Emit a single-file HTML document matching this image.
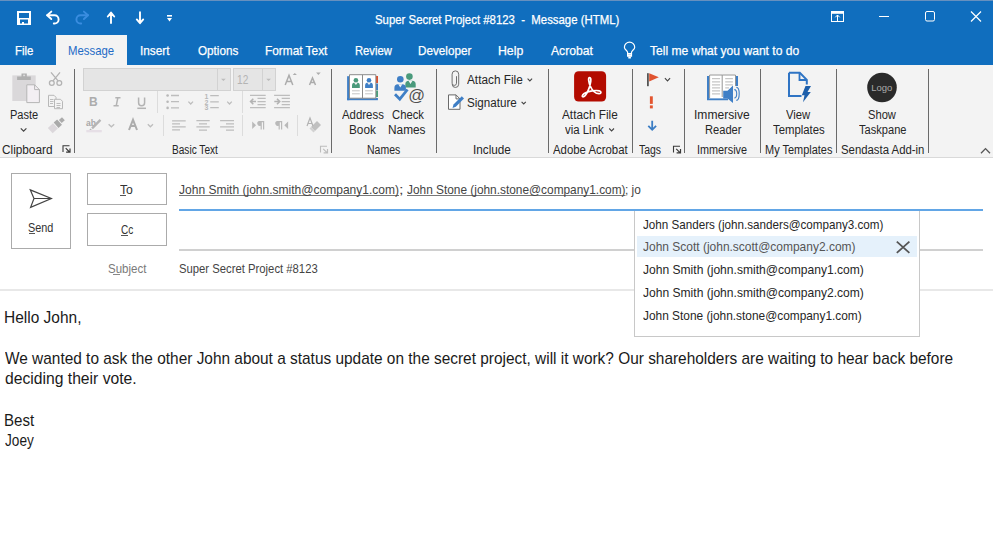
<!DOCTYPE html>
<html><head><meta charset="utf-8"><title>Outlook Message</title>
<style>
html,body{margin:0;padding:0}
body{width:993px;height:536px;overflow:hidden;position:relative;background:#fff;font-family:"Liberation Sans",sans-serif}
.a{position:absolute}
.t{position:absolute;white-space:pre;line-height:normal;transform-origin:0 0;font-family:"Liberation Sans",sans-serif}
svg{position:absolute;overflow:visible}
.sep{position:absolute;width:1px;background:#6a6a6a}
</style></head><body>
<!-- title bar + tabs -->
<div class="a" style="left:0;top:0;width:993px;height:65px;background:#106ebe"></div>
<div class="a" style="left:0;top:0;width:993px;height:1px;background:#6690bf"></div>
<div class="a" style="left:56px;top:35px;width:71px;height:30px;background:#f3f3f3"></div>
<!-- ribbon -->
<div class="a" style="left:0;top:65px;width:993px;height:92px;background:#f3f3f3"></div>
<div class="a" style="left:0;top:157px;width:993px;height:1px;background:#d9d9d9"></div>
<!-- separators -->
<div class="sep" style="left:74px;top:69px;height:84px;background:#6a6a6a"></div>
<div class="sep" style="left:331px;top:69px;height:84px"></div>
<div class="sep" style="left:436px;top:69px;height:84px"></div>
<div class="sep" style="left:548px;top:69px;height:84px"></div>
<div class="sep" style="left:632px;top:69px;height:84px"></div>
<div class="sep" style="left:684px;top:69px;height:84px"></div>
<div class="sep" style="left:760px;top:69px;height:84px"></div>
<div class="sep" style="left:836px;top:69px;height:84px"></div>
<div class="sep" style="left:928px;top:69px;height:84px"></div>
<!-- font combos -->
<div class="a" style="left:83px;top:68px;width:146px;height:21px;background:#e5e5e5;border:1px solid #d2d2d2"></div>
<div class="a" style="left:217px;top:69px;width:1px;height:21px;background:#d2d2d2"></div>
<div class="a" style="left:233px;top:68px;width:41px;height:21px;background:#e5e5e5;border:1px solid #d2d2d2"></div>
<div class="a" style="left:262px;top:69px;width:1px;height:21px;background:#d2d2d2"></div>

<!-- compose header -->
<div class="a" style="left:11px;top:173px;width:58px;height:74px;border:1px solid #ababab"></div>
<div class="a" style="left:87px;top:173px;width:78px;height:30px;border:1px solid #ababab"></div>
<div class="a" style="left:87px;top:213px;width:78px;height:31px;border:1px solid #ababab"></div>
<div class="a" style="left:179px;top:209px;width:804px;height:2px;background:#62a6e6"></div>
<div class="a" style="left:179px;top:249px;width:804px;height:2px;background:#d0d0d0"></div>
<div class="a" style="left:0;top:289px;width:993px;height:2px;background:#e8e8e8"></div>
<!-- dropdown -->
<div class="a" style="left:634px;top:211px;width:284px;height:125px;background:#fff;border:1px solid #c8c8c8;border-top:none"></div>
<div class="a" style="left:637px;top:236px;width:280px;height:21px;background:#e5f1fb"></div>

<!-- access key underlines -->
<div class="a" style="left:120px;top:195px;width:6px;height:1px;background:#555"></div>
<div class="a" style="left:120.5px;top:235px;width:7.5px;height:1px;background:#555"></div>
<div class="a" style="left:29px;top:233px;width:6px;height:1px;background:#555"></div>
<div class="a" style="left:113px;top:274px;width:7px;height:1px;background:#888"></div>
<svg width="993" height="536" viewBox="0 0 993 536" style="left:0;top:0">
<!-- QAT -->
<g fill="#fff">
  <path d="M17 11h14v14h-14z M19 13v5h10v-5z M20 19.5v4h2v-1.5h2v1.5h4v-4z" fill-rule="evenodd"/>
</g>
<g fill="none" stroke="#fff" stroke-width="1.9" stroke-linecap="round" stroke-linejoin="round">
  <path d="M47.2 15.3H54.5A4.1 4.1 0 0 1 54.5 23.5H53.8"/>
  <path d="M51.3 11.6L47.2 15.3L51.3 19"/>
  <path d="M107.8 16.5L111 12.6L114.2 16.5M111 13V23"/>
  <path d="M136.8 19.4L140 23.2L143.2 19.4M140 12.3V22.6"/>
</g>
<g fill="none" stroke="#3a8de0" stroke-width="1.9" stroke-linecap="round" stroke-linejoin="round">
  <path d="M88 15.3H80.5A4.1 4.1 0 0 0 80.5 23.5H81.2"/>
  <path d="M83.9 11.6L88 15.3L83.9 19"/>
</g>
<g fill="#fff">
  <rect x="167" y="15" width="5" height="1.6"/>
  <path d="M167 18H172L169.5 21.6Z"/>
</g>
<!-- window controls -->
<g fill="none" stroke="#fff" stroke-width="1">
  <rect x="831.5" y="11.5" width="12" height="10"/>
  <path d="M831.5 13.3H843.5"/>
  <path d="M837.5 21V15M835.3 17.3L837.5 15L839.7 17.3"/>
  <path d="M879 16.5H889"/>
  <rect x="925.5" y="11.5" width="9" height="9.5" rx="1.5"/>
  <path d="M971 11.5L981 21.5M981 11.5L971 21.5" stroke-width="1.2"/>
</g>
<rect x="831" y="11" width="13" height="2" fill="#fff"/>
<!-- lightbulb -->
<g fill="none" stroke="#fff" stroke-width="1.2">
  <path d="M627.6 53.6V52.3C627.6 50.6 624.4 49.6 624.4 47.2A5.15 5.15 0 0 1 634.7 47.2C634.7 49.6 631.5 50.6 631.5 52.3V53.6"/>
  <path d="M627.6 53.6H631.5V56.2H627.6Z M627.6 55H631.5"/>
</g>
<rect x="628.3" y="56.6" width="2.6" height="1.9" fill="#fff"/>
<!-- clipboard group -->
<rect x="12.3" y="75.4" width="23.4" height="25.6" fill="#dad8da"/>
<path d="M17.1 80V76.5H21.5V73.5H26.8V76.5H30.8V80Z" fill="#b0b0b0"/>
<rect x="23.2" y="74.6" width="1.9" height="1.6" fill="#dcdcdc"/>
<path d="M26.8 84.8H34.6L39.4 89.6V102.6H26.8Z" fill="#f3eff3" stroke="#b5b5b5" stroke-width="1"/>
<path d="M34.6 84.8V89.6H39.4" fill="none" stroke="#b5b5b5" stroke-width="1"/>
<g fill="none" stroke="#b3b3b3" stroke-width="1.3">
  <circle cx="51.8" cy="83" r="2.4"/><circle cx="59.3" cy="83" r="2.4"/>
  <path d="M53 80.8L60 72.3M58.1 80.8L51 72.3"/>
</g>
<g fill="#f3f3f3" stroke="#b8b8b8" stroke-width="1">
  <path d="M48.5 95.3H54L56 97.3V106.5H48.5Z"/>
  <path d="M54.5 99.3H60.5L62.5 101.3V108.7H54.5Z"/>
</g>
<g stroke="#bdbdbd" stroke-width="1">
  <path d="M50 99.5H53.5M50 101.5H53.5M50 103.5H53M56.5 103.5H60.5M56.5 105.5H60.5M56.5 107.5H60"/>
</g>
<g transform="translate(57.3 124.2) rotate(-42)">
  <rect x="-9.5" y="-3.6" width="7" height="7.2" fill="#dbd7db"/>
  <rect x="-1.6" y="-3.6" width="4.6" height="7.2" fill="#a9a9a9"/>
  <rect x="4" y="-2.1" width="4.2" height="4.2" fill="#ababab"/>
</g>
<path d="M20.8 128.4L23.6 131.2L26.4 128.4" fill="none" stroke="#444" stroke-width="1.2"/>
<path d="M63.0 152.0V145.7H69.5" fill="none" stroke="#3a3a3a" stroke-width="1.1"/><path d="M65.7 148.2L69.5 152.0M66.1 152.2H70.0V148.39999999999998" fill="none" stroke="#3a3a3a" stroke-width="1.2"/>
<path d="M320.5 152.60000000000002V146.3H327" fill="none" stroke="#bdbdbd" stroke-width="1.1"/><path d="M323.2 148.8L327 152.60000000000002M323.6 152.8H327.5V149.0" fill="none" stroke="#bdbdbd" stroke-width="1.2"/>
<path d="M673.5 152.60000000000002V146.3H680" fill="none" stroke="#3a3a3a" stroke-width="1.1"/><path d="M676.2 148.8L680 152.60000000000002M676.6 152.8H680.5V149.0" fill="none" stroke="#3a3a3a" stroke-width="1.2"/>
<!-- basic text -->
<path d="M221 78.8L223.4 81L225.8 78.8Z M266.2 78.8L268.6 81L271 78.8Z" fill="#bdbdbd"/>
<g fill="#b0b0b0" font-family="Liberation Sans" >
</g>
<g fill="none" stroke="#acacac" stroke-width="1.5">
  <path d="M285.2 85L289 75.3L292.8 85M286.6 81.6H291.4"/>
  <path d="M309.5 85L312.5 77.9L315.5 85M310.6 82.5H314.4"/>
</g>
<path d="M292.7 75.1L294.8 73L296.9 75.1Z M316.1 72.5H320.7L318.4 75.1Z" fill="#acacac"/>
<g fill="#dcdcdc">
  <rect x="157" y="91" width="1" height="22"/><rect x="242" y="91" width="1" height="22"/>
  <rect x="163" y="115" width="1" height="21"/><rect x="242" y="115" width="1" height="21"/><rect x="297" y="115" width="1" height="21"/>
</g>
<text x="89" y="106.1" font-family="Liberation Sans" font-size="12" font-weight="bold" fill="#acacac">B</text>
<g fill="none" stroke="#b3b3b3" stroke-width="1.5">
  <path d="M117.8 97.8L116.2 105.8M115.3 97.8H120.5M113.5 105.8H118.7"/>
  <path d="M138.6 97.5V102.8A3 3 0 0 0 144.6 102.8V97.5"/>
  <path d="M137.3 108.3H146"/>
</g>
<g fill="#b8b8b8">
  <circle cx="167.6" cy="95.5" r="1.3"/><circle cx="167.6" cy="101.7" r="1.3"/><circle cx="167.6" cy="107.9" r="1.3"/>
</g>
<g fill="none" stroke="#bdbdbd" stroke-width="1.3">
  <path d="M171 95.5H179M171 101.7H179M171 107.9H179"/>
  <path d="M210.2 95.7H218.8M210.2 101.8H218.8M210.2 107.7H218.8"/>
  <path d="M188.4 101.6L190.7 104L193 101.6M227.2 101.6L229.5 104L231.8 101.6M108.6 124.2L111.4 126.8L114.2 124.2M147.8 124.2L150.4 126.8L153 124.2"/>
  <path d="M250 95.4H265.7M257.5 98.4H265.7M257.5 101.6H265.7M257.5 104.7H265.7M250 107.7H265.7"/>
  <path d="M274.1 95.4H289.9M281.7 98.4H289.9M281.7 101.6H289.9M281.7 104.7H289.9M274.1 107.7H289.9"/>
  <path d="M172.1 120.8H185.7M172.1 123.8H180M172.1 126.9H185.7M172.1 129.9H180"/>
  <path d="M196.4 120.6H209.7M199 123.8H207M196.4 126.9H209.7M199 130.1H207"/>
  <path d="M220.1 120.6H234M226 123.8H234M220.1 126.9H234M226 130.1H234"/>
</g>
<g fill="none" stroke="#b3b3b3" stroke-width="1.6">
  <path d="M256 101.5H250.8M253.3 98.8L250.6 101.5L253.3 104.2"/>
  <path d="M274.3 101.5H279.5M277 98.8L279.7 101.5L277 104.2"/>
</g>
<g fill="#b8b8b8" font-family="Liberation Sans" font-size="7" font-weight="bold">
  <text x="204.6" y="98.6">1</text><text x="204.6" y="104.5">2</text><text x="204.6" y="110.4">3</text>
</g>
<!-- highlight & font color -->
<g fill="#b3b3b3">
  <text x="86" y="125.5" font-family="Liberation Sans" font-size="8.5" font-weight="bold" fill="#a8a8a8">ab</text>
</g>
<path d="M91.2 127.5L99.6 119L101.3 120.7L92.9 129.2Z M90.2 128.5L92 130H89.5Z" fill="#b5b5b5"/>
<rect x="86.3" y="130" width="15.5" height="2.3" fill="#e6dfe6"/>
<path d="M129 130L133 119.8L137 130M130.6 126H135.4" fill="none" stroke="#acacac" stroke-width="2"/>
<!-- LTR/RTL -->
<g fill="#b9b9b9">
  <path d="M252.2 121.5L256 125.2L252.2 128.9Z"/>
  <path d="M259 121H264.2V129.4H263V122.3H261.8V129.4H260.6V125.8A2.4 2.4 0 0 1 259 121Z"/>
  <path d="M288.1 121.5L284.3 125.2L288.1 128.9Z"/>
  <path d="M277 121H282.2V129.4H281V122.3H279.8V129.4H278.6V125.8A2.4 2.4 0 0 1 277 121Z"/>
</g>
<g fill="#c0c0c0">
  <path d="M311 127L317 121L321 125L315 131Z"/>
  <path d="M309.5 128.5L311 127L315 131L313.5 132.5Z" fill="#d2d2d2"/>
</g>
<path d="M307 126L310 118L313 126M308 123.5H312" fill="none" stroke="#b3b3b3" stroke-width="1.2"/>
<!-- Names: address book -->
<rect x="347.1" y="76.2" width="2.2" height="24" fill="#3f7fc6"/>
<rect x="347.1" y="98" width="30.8" height="2.2" fill="#3f7fc6"/>
<rect x="376" y="76" width="2" height="7" fill="#d9502f"/>
<rect x="376" y="83.5" width="2" height="6.5" fill="#3f7fc6"/>
<rect x="376" y="90.5" width="2" height="6.5" fill="#4aa07c"/>
<path d="M349.5 74.7H362.5V98.2H349.5Z M362.5 74.7H375.8V98.2H362.5Z" fill="#fff" stroke="#8c8c8c" stroke-width="1"/>
<circle cx="355.9" cy="80.3" r="2.3" fill="#4a9a7c"/>
<path d="M352 88V85.5A3 3 0 0 1 355 82.5H356.8A3 3 0 0 1 359.8 85.5V88Z" fill="#4a9a7c"/>
<circle cx="369" cy="80.3" r="2.3" fill="#3f7fc6"/>
<path d="M365.1 88V85.5A3 3 0 0 1 368.1 82.5H369.9A3 3 0 0 1 372.9 85.5V88Z" fill="#3f7fc6"/>
<path d="M352 90.8H359.8M352 93.8H359.8M365.1 90.8H372.9M365.1 93.8H372.9" stroke="#c4c4c4" stroke-width="1"/>
<!-- check names -->
<circle cx="409.4" cy="76.6" r="3.3" fill="#4a9a7c"/>
<path d="M405.3 87.5V84.3A3.5 3.5 0 0 1 408.8 80.8H412.2A3.5 3.5 0 0 1 415.7 84.3V87.5Z" fill="#4a9a7c"/>
<circle cx="400.3" cy="79.3" r="3.3" fill="#3f7fc6"/>
<path d="M394.4 90.7V87.8A3.5 3.5 0 0 1 397.9 84.3H402.4A3.5 3.5 0 0 1 405.9 87.8V90.7Z" fill="#3f7fc6"/>
<path d="M398.3 84.3H402.3L400.3 87.6Z M408.5 80.8H412.5L410.5 84Z M353.9 82.5H357.9L355.9 85Z M367 82.5H371L369 85Z" fill="#f3f3f3"/>
<path d="M395 94.3L399.8 99.2L407.5 89.5" fill="none" stroke="#3f7fc6" stroke-width="2.8"/>
<text x="408.3" y="100.6" fill="#505050" font-family="Liberation Sans" font-size="16.5">@</text>
<!-- include -->
<path d="M456.5 76.2V83.2A2.2 2.2 0 0 1 452.1 83.2V74.2A3.3 3.3 0 0 1 458.7 74.2V84.2A3.2 3.2 0 0 1 452.2 84.2" fill="none" stroke="#6f6f6f" stroke-width="1"/>
<path d="M448.5 94.9H456L460 98.9V109.3H448.5Z" fill="#fff" stroke="#6a6a6a" stroke-width="1"/>
<path d="M456 94.9V98.9H460" fill="none" stroke="#6a6a6a" stroke-width="1"/>
<path d="M452.5 108L453.5 104.5L461.8 96.3L464 98.5L455.8 106.8Z" fill="#3f7fc6"/>
<path d="M527.6 78.6L529.85 80.9L532.1 78.6M521.6 101.8L523.7 104L525.8 101.8M609.2 128.5L611.6 130.9L614 128.5M664.9 78.2L667.5 80.9L670.1 78.2" fill="none" stroke="#444" stroke-width="1.1"/>
<!-- acrobat -->
<rect x="574.1" y="71.2" width="32" height="30.3" rx="4.5" fill="#b30b00"/>
<path d="M589.6 77.6C588 77.6 588.5 82 590.5 86.5C592.2 90.5 595 93.6 599 93.7C601.5 93.8 601.6 91.3 599.3 90.8C595.5 90 588.5 91 584.2 93.5C581.8 95 581.8 97.3 583.5 96.8C586 96 590 88 590.7 81.6C591 79 590.8 77.6 589.6 77.6Z" fill="none" stroke="#fff" stroke-width="1.7"/>
<!-- tags -->
<rect x="647" y="73.2" width="1.8" height="13" fill="#555"/>
<path d="M649.2 73.2L658.8 77.3L649.2 81.4Z" fill="#e0532f"/>
<rect x="649.9" y="96.3" width="2.9" height="7.6" fill="#e3552f"/>
<rect x="649.9" y="105.4" width="2.9" height="3" fill="#e3552f"/>
<path d="M652.2 120.8V129.5M648.3 125.8L652.2 129.8L656.1 125.8" fill="none" stroke="#3b7dc4" stroke-width="1.8"/>
<!-- immersive reader -->
<path d="M707 76H709.1V98.2H728V100.2H707Z M736 76H738V86H736Z" fill="#3f7fc6"/>
<rect x="709.1" y="74.4" width="26.9" height="23.8" fill="#fff"/>
<path d="M709.6 98V75H722.2L722.2 97M722.2 75H735.5V86" fill="none" stroke="#959595" stroke-width="1"/>
<path d="M712 78.7H720.1M712 81.8H720.1M712 84.8H720.1M712 87.8H720.1M712 90.8H720.1M712 93.9H720.1M725.2 78.7H732.9M725.2 81.8H732.9M725.2 84.8H732.9M725.2 87.8H729" stroke="#c6c6c6" stroke-width="1.2"/>
<path d="M723.2 90.8H727.5L733 85.5V102.9L727.5 98.6H723.2Z" fill="#3f7fc6"/>
<rect x="733" y="86" width="6" height="15" fill="#f3f3f3"/>
<path d="M734.3 89.6A2.4 4.2 0 0 1 734.3 98M736.3 87.2A2.9 6.6 0 0 1 736.3 100.4" fill="none" stroke="#3f7fc6" stroke-width="1.1"/>
<!-- view templates -->
<path d="M789 72.8H799.8L806.8 79.8V84.5M801.5 96H789V72.8" fill="none" stroke="#2f74c4" stroke-width="2"/>
<path d="M799.5 73V80H806.5" fill="none" stroke="#2f74c4" stroke-width="1.8"/>
<path d="M805.5 86H811L807.5 92H810.8L803 102.3L804.5 95.2H801.8Z" fill="#1c5eab"/>
<!-- logo -->
<circle cx="882" cy="87.5" r="14.8" fill="#2a2a2a"/>
<text x="881.8" y="90.5" fill="#ababab" font-family="Liberation Sans" font-size="9.5" text-anchor="middle">Logo</text>
<!-- collapse caret -->
<path d="M981 153.3L985.5 148.6L990 153.3" fill="none" stroke="#555" stroke-width="1.3"/>
<!-- send -->
<path d="M30.3 189.9L51.4 198.5L30.6 207.4L34 198.5Z M34 198.5H51.4" fill="none" stroke="#444" stroke-width="1.2" stroke-linejoin="miter"/>
<!-- dropdown X -->
<path d="M896.8 241.6L909.4 252.8M909.4 241.6L896.8 252.8" stroke="#555" stroke-width="1.8"/>
</svg>

<div class="t" style="left:375.00px;top:12.20px;font-size:13px;color:#ffffff;transform:scaleX(0.8759);-webkit-text-stroke:0.25px #ffffff">Super Secret Project #8123  -  Message (HTML)</div>
<div class="t" style="left:14.82px;top:42.80px;font-size:13px;color:#ffffff;transform:scaleX(0.8774);-webkit-text-stroke:0.25px #ffffff">File</div>
<div class="t" style="left:67.73px;top:43.20px;font-size:13px;color:#1f6bc6;transform:scaleX(0.8735);">Message</div>
<div class="t" style="left:140.29px;top:43.20px;font-size:13px;color:#ffffff;transform:scaleX(0.9091);-webkit-text-stroke:0.25px #ffffff">Insert</div>
<div class="t" style="left:197.60px;top:43.20px;font-size:13px;color:#ffffff;transform:scaleX(0.9006);-webkit-text-stroke:0.25px #ffffff">Options</div>
<div class="t" style="left:265.09px;top:43.20px;font-size:13px;color:#ffffff;transform:scaleX(0.9116);-webkit-text-stroke:0.25px #ffffff">Format Text</div>
<div class="t" style="left:354.64px;top:43.20px;font-size:13px;color:#ffffff;transform:scaleX(0.8642);-webkit-text-stroke:0.25px #ffffff">Review</div>
<div class="t" style="left:418.10px;top:43.20px;font-size:13px;color:#ffffff;transform:scaleX(0.8994);-webkit-text-stroke:0.25px #ffffff">Developer</div>
<div class="t" style="left:498.46px;top:43.20px;font-size:13px;color:#ffffff;transform:scaleX(0.9449);-webkit-text-stroke:0.25px #ffffff">Help</div>
<div class="t" style="left:551.00px;top:43.20px;font-size:13px;color:#ffffff;transform:scaleX(0.9360);-webkit-text-stroke:0.25px #ffffff">Acrobat</div>
<div class="t" style="left:649.70px;top:43.20px;font-size:13px;color:#ffffff;transform:scaleX(0.9302);-webkit-text-stroke:0.25px #ffffff">Tell me what you want to do</div>
<div class="t" style="left:9.72px;top:107.60px;font-size:12.5px;color:#262626;transform:scaleX(0.8835);">Paste</div>
<div class="t" style="left:342.20px;top:107.60px;font-size:12.5px;color:#262626;transform:scaleX(0.9122);">Address</div>
<div class="t" style="left:349.46px;top:123.40px;font-size:12.5px;color:#262626;transform:scaleX(0.9419);">Book</div>
<div class="t" style="left:391.60px;top:107.60px;font-size:12.5px;color:#262626;transform:scaleX(0.9010);">Check</div>
<div class="t" style="left:388.45px;top:123.40px;font-size:12.5px;color:#262626;transform:scaleX(0.9467);">Names</div>
<div class="t" style="left:467.40px;top:73.20px;font-size:12.5px;color:#262626;transform:scaleX(0.9442);">Attach File</div>
<div class="t" style="left:467.40px;top:96.40px;font-size:12.5px;color:#262626;transform:scaleX(0.9298);">Signature</div>
<div class="t" style="left:562.30px;top:107.60px;font-size:12.5px;color:#262626;transform:scaleX(0.9442);">Attach File</div>
<div class="t" style="left:565.40px;top:123.40px;font-size:12.5px;color:#262626;transform:scaleX(0.9135);">via Link</div>
<div class="t" style="left:694.24px;top:107.60px;font-size:12.5px;color:#262626;transform:scaleX(0.9649);">Immersive</div>
<div class="t" style="left:704.71px;top:123.40px;font-size:12.5px;color:#262626;transform:scaleX(0.8887);">Reader</div>
<div class="t" style="left:786.20px;top:107.60px;font-size:12.5px;color:#262626;transform:scaleX(0.9016);">View</div>
<div class="t" style="left:773.00px;top:123.40px;font-size:12.5px;color:#262626;transform:scaleX(0.9080);">Templates</div>
<div class="t" style="left:868.10px;top:107.60px;font-size:12.5px;color:#262626;transform:scaleX(0.8933);">Show</div>
<div class="t" style="left:858.50px;top:123.40px;font-size:12.5px;color:#262626;transform:scaleX(0.8869);">Taskpane</div>
<div class="t" style="left:1.70px;top:142.70px;font-size:12px;color:#262626;transform:scaleX(0.9825);">Clipboard</div>
<div class="t" style="left:171.90px;top:142.70px;font-size:12px;color:#262626;transform:scaleX(0.8419);">Basic Text</div>
<div class="t" style="left:367.20px;top:142.70px;font-size:12px;color:#262626;transform:scaleX(0.8735);">Names</div>
<div class="t" style="left:473.02px;top:142.70px;font-size:12px;color:#262626;transform:scaleX(0.9784);">Include</div>
<div class="t" style="left:552.80px;top:142.70px;font-size:12px;color:#262626;transform:scaleX(0.9481);">Adobe Acrobat</div>
<div class="t" style="left:639.20px;top:142.70px;font-size:12px;color:#262626;transform:scaleX(0.8719);">Tags</div>
<div class="t" style="left:697.40px;top:142.70px;font-size:12px;color:#262626;transform:scaleX(0.9037);">Immersive</div>
<div class="t" style="left:764.60px;top:142.70px;font-size:12px;color:#262626;transform:scaleX(0.9132);">My Templates</div>
<div class="t" style="left:840.60px;top:142.70px;font-size:12px;color:#262626;transform:scaleX(0.9471);">Sendasta Add-in</div>
<div class="t" style="left:236.60px;top:72.30px;font-size:13px;color:#b4b4b4;transform:scaleX(0.7800);">12</div>
<div class="t" style="left:28.40px;top:219.80px;font-size:13px;color:#333333;transform:scaleX(0.8364);">Send</div>
<div class="t" style="left:120.00px;top:181.80px;font-size:13px;color:#333333;transform:scaleX(0.9407);">To</div>
<div class="t" style="left:120.60px;top:222.30px;font-size:13px;color:#333333;transform:scaleX(0.7749);">Cc</div>
<div class="t" style="left:107.50px;top:261.20px;font-size:13px;color:#7a7a7a;transform:scaleX(0.8846);">Subject</div>
<div class="t" style="left:178.80px;top:181.60px;font-size:13px;color:#444444;transform:scaleX(0.9248);text-decoration:underline;text-decoration-color:#777;text-underline-offset:1px;text-decoration-skip-ink:none">John Smith (john.smith@company1.com)</div>
<div class="t" style="left:399.25px;top:181.60px;font-size:13px;color:#444444;transform:scaleX(1.2500);">;</div>
<div class="t" style="left:406.50px;top:181.60px;font-size:13px;color:#444444;transform:scaleX(0.9128);text-decoration:underline;text-decoration-color:#777;text-underline-offset:1px;text-decoration-skip-ink:none">John Stone (john.stone@company1.com)</div>
<div class="t" style="left:624.79px;top:181.60px;font-size:13px;color:#444444;transform:scaleX(0.9124);">; jo</div>
<div class="t" style="left:178.80px;top:261.20px;font-size:13px;color:#444444;transform:scaleX(0.8685);">Super Secret Project #8123</div>
<div class="t" style="left:643.00px;top:216.60px;font-size:13px;color:#262626;transform:scaleX(0.8961);">John Sanders (john.sanders@company3.com)</div>
<div class="t" style="left:643.00px;top:239.40px;font-size:13px;color:#555555;transform:scaleX(0.9212);">John Scott (john.scott@company2.com)</div>
<div class="t" style="left:643.00px;top:262.30px;font-size:13px;color:#262626;transform:scaleX(0.9282);">John Smith (john.smith@company1.com)</div>
<div class="t" style="left:643.00px;top:285.20px;font-size:13px;color:#262626;transform:scaleX(0.9282);">John Smith (john.smith@company2.com)</div>
<div class="t" style="left:643.00px;top:308.10px;font-size:13px;color:#262626;transform:scaleX(0.9136);">John Stone (john.stone@company1.com)</div>
<div class="t" style="left:4.42px;top:309.30px;font-size:15.75px;color:#1a1a1a;transform:scaleX(0.9827);">Hello John,</div>
<div class="t" style="left:5.40px;top:350.10px;font-size:15.75px;color:#1a1a1a;transform:scaleX(0.9786);">We wanted to ask the other John about a status update on the secret project, will it work? Our shareholders are waiting to hear back before</div>
<div class="t" style="left:5.40px;top:370.40px;font-size:15.75px;color:#1a1a1a;transform:scaleX(0.9959);">deciding their vote.</div>
<div class="t" style="left:4.44px;top:411.90px;font-size:15.75px;color:#1a1a1a;transform:scaleX(0.9570);">Best</div>
<div class="t" style="left:5.40px;top:432.20px;font-size:15.75px;color:#1a1a1a;transform:scaleX(0.8654);">Joey</div>
</body></html>
